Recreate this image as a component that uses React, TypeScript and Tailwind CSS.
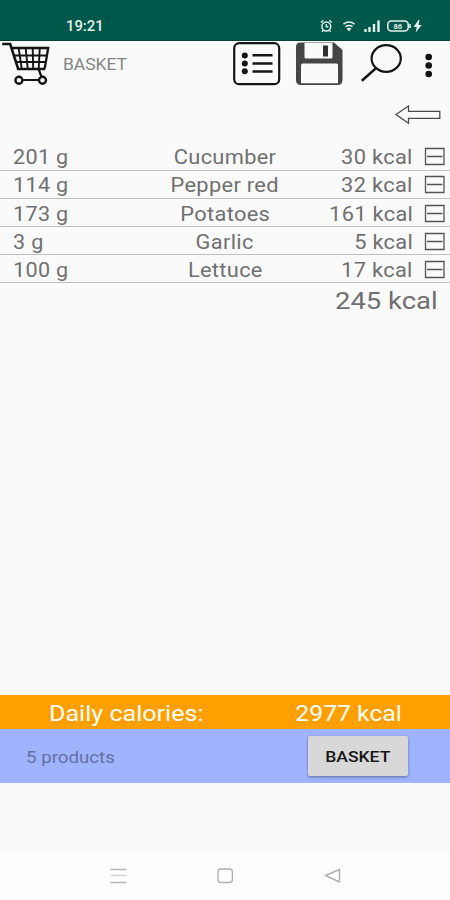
const items = [
  { amount: '201 g', name: 'Cucumber', kcal: '30 kcal' },
  { amount: '114 g', name: 'Pepper red', kcal: '32 kcal' },
  { amount: '173 g', name: 'Potatoes', kcal: '161 kcal' },
  { amount: '3 g', name: 'Garlic', kcal: '5 kcal' },
  { amount: '100 g', name: 'Lettuce', kcal: '17 kcal' },
];

function StatusBar() {
  return (
    <div className="flex h-[41px] items-start border-b border-[#064236] bg-[#00584a] pl-[66px] text-[#e3f0ec]">
      <span className="mt-[18px] w-[254px] text-[14px] leading-4 font-medium">
        <span className="inline-block origin-left scale-x-[1.06]">19:21</span>
      </span>
      <svg className="mt-[18px]" width="104" height="16" viewBox="0 0 104 16" fill="none" stroke="currentColor">
        <circle cx="6.3" cy="8.5" r="4.4" strokeWidth="1.5" />
        <path d="M6.3 6v2.7h2M1 4.5l2.3-2.2M11.6 4.5L9.3 2.3M3 12.5l-1 1.2M9.6 12.5l1 1.2" strokeWidth="1.4" />
        <path d="M23.4 6.2q5.6-4.4 11.2 0M25.4 8.7q3.6-2.6 7.2 0" strokeWidth="1.5" />
        <path d="M26.6 10.5q2.4-1.4 4.8 0L29 13.5z" fill="currentColor" stroke="none" />
        <path d="M45.5 11v3M49.5 9v5M54 6v8M58.5 2.5v11.5" strokeWidth="2.4" />
        <rect x="67.8" y="3" width="20.4" height="10" rx="3.5" strokeWidth="1.6" />
        <path d="M90 6v4" strokeWidth="1.6" />
        <text x="73.5" y="10.7" fontSize="7.5" fontWeight="700" fill="currentColor" stroke="none">86</text>
        <path d="M98.5 2l-5 7h3.2l-1 5.5 6-7.5h-3.2l1-5z" fill="currentColor" stroke="none" />
      </svg>
    </div>
  );
}

function CartIcon() {
  return (
    <svg width="50" height="46" viewBox="0.8 -0.5 50 46" fill="none" stroke="#151515">
      <path d="M2 2.5h8L18 27.5h27" strokeWidth="2.6" />
      <path d="M12 6.5h36L44.5 27" strokeWidth="2.3" />
      <path d="M13.5 14h32.8M16 20.5h29.5M18.5 7l3 20M25.5 7l2 20M32.5 7l.5 20M39.5 7L38.5 27" strokeWidth="1.9" />
      <path d="M38.5 28l2.7 7M22 38.5h16" strokeWidth="2.2" />
      <circle cx="18.7" cy="38.8" r="3.5" strokeWidth="2.4" />
      <circle cx="42.3" cy="38.8" r="3.5" strokeWidth="2.4" />
    </svg>
  );
}

function Toolbar() {
  return (
    <header className="flex h-[57px] items-start pl-px">
      <CartIcon />
      <span className="mt-[14px] ml-[12px] w-[169px] text-[16px] leading-5 text-[#858585]">
        <span className="inline-block origin-left scale-x-[1.09]">BASKET</span>
      </span>
      <svg className="mt-px" width="49" height="44" viewBox="0 0 49 44" fill="none" stroke="#151515">
        <rect x="2.2" y="1.2" width="45" height="41" rx="5" strokeWidth="2.2" />
        <path d="M20.5 13.3h20M20.5 21.4h20M20.5 29.5h20" strokeWidth="2.5" />
        <g fill="#151515" stroke="none">
          <circle cx="12.8" cy="13.5" r="3" />
          <circle cx="12.8" cy="21.5" r="3" />
          <circle cx="12.8" cy="29.3" r="3" />
        </g>
      </svg>
      <svg className="mt-px ml-[14px]" width="48" height="44" viewBox="0 0 48 44">
        <path d="M5 .5h34L47.5 8v30q0 5-5 5H6q-5 0-5-5V5q0-4.5 4-4.5z" fill="#454545" />
        <path d="M9.5 1h28v14q0 1.5-1.5 1.5h-25Q9.5 16.5 9.5 15z" fill="#fafafa" />
        <path d="M28 3.5h5v11h-5z" fill="#303030" />
        <path d="M8 21.5h33.5q1.5 0 1.5 1.5v18.3H6V23.5q0-2 2-2z" fill="#fafafa" />
      </svg>
      <svg className="mt-[2px] ml-[16px]" width="44" height="40" viewBox="-0.5 -0.3 44 40" fill="none" stroke="#151515">
        <ellipse cx="26.7" cy="15.2" rx="14.6" ry="13.3" strokeWidth="2.2" />
        <path d="M16 25.3L2.3 37.5" strokeWidth="2.6" />
      </svg>
      <svg className="mt-[11px] ml-[22px]" width="8" height="30" viewBox="0 0 8 30" fill="#111">
        <circle cx="3.7" cy="5" r="3.3" />
        <circle cx="3.7" cy="13.5" r="3.3" />
        <circle cx="3.7" cy="22" r="3.3" />
      </svg>
    </header>
  );
}

export default function App() {
  return (
    <main className="flex h-[900px] w-[450px] flex-col overflow-hidden bg-[#fafafa] font-[Roboto,sans-serif]">
      <StatusBar />
      <Toolbar />
      <div className="flex h-[44.4px] justify-end pt-[6px] pr-[8px]">
        <svg width="48" height="21" viewBox="0 0 48 21" fill="none" stroke="#4b4b4b" strokeWidth="1.3">
          <path d="M2 10.5L14.5 2v5.3h31.3v7H14.5v5z" />
        </svg>
      </div>
      <section className="flex flex-col text-[20px] tracking-[0.3px] text-[#707070]">
        {items.map((item) => (
          <div key={item.name} className="flex h-[28.2px] items-center border-b border-[#c0c0c0] pt-[2.4px] pr-[4px] pl-[13px]">
            <span className="w-[112px]">
              <span className="inline-block origin-left scale-x-[1.08]">{item.amount}</span>
            </span>
            <span className="w-[200px] text-center">
              <span className="inline-block scale-x-[1.09]">{item.name}</span>
            </span>
            <span className="flex w-[88px] justify-end">
              <span className="inline-block origin-right scale-x-[1.09] whitespace-nowrap">{item.kcal}</span>
            </span>
            <svg className="ml-auto" width="22" height="20" viewBox="0 0 22 20" fill="none" stroke="#555" strokeWidth="1.3">
              <path d="M1.5 1.5h18.5v16H1.5zM3 9.5h15.5" />
            </svg>
          </div>
        ))}
      </section>
      <div className="flex justify-end pt-[2px] pr-[12px] text-[24.5px] leading-[32px] text-[#707070]">
        <span className="origin-right scale-x-[1.12]">245 kcal</span>
      </div>
      <footer className="mt-auto">
        <div className="flex h-[34px] items-center justify-between bg-[#ffa000] pt-[3px] pr-[48px] pl-[49px] text-[22.5px] text-white">
          <span className="origin-left scale-x-[1.115]">Daily calories:</span>
          <span className="origin-right scale-x-[1.1]">2977 kcal</span>
        </div>
        <div className="flex h-[54px] items-center justify-between bg-[#9fb3ff] pr-[42px] pl-[26px]">
          <span className="origin-left scale-x-[1.1] pt-[3px] text-[17px] text-[#63719f]">5 products</span>
          <button className="h-[40px] w-[100px] rounded-[2px] bg-[#d8d8d8] pt-[3px] text-[15.5px] font-medium text-[#161616] shadow-[0_1px_3px_#0006]">
            <span className="inline-block scale-x-[1.13]">BASKET</span>
          </button>
        </div>
        <div className="h-[69px]" />
        <nav className="flex h-[48px] items-start justify-between bg-[#fefefe] px-[109px] pt-[15px]">
          <svg width="18" height="18" viewBox="0 0 18 18" stroke="#b5b5b5" strokeWidth="1.5">
            <path d="M1.5 2.5h16M1.5 15.5h16" />
            <path d="M1.5 8.5h16" stroke="#d2d2d2" />
          </svg>
          <svg width="18" height="18" viewBox="0 0 18 18" fill="none" stroke="#b0b0b0" strokeWidth="1.4">
            <rect x="2" y="2" width="14.4" height="13.5" rx="3" />
          </svg>
          <svg width="18" height="18" viewBox="0 0 18 18" fill="none" stroke="#b0b0b0" strokeWidth="1.4" strokeLinejoin="round">
            <path d="M2.5 8.5L16.5 2.5v12.5z" />
          </svg>
        </nav>
      </footer>
    </main>
  );
}
